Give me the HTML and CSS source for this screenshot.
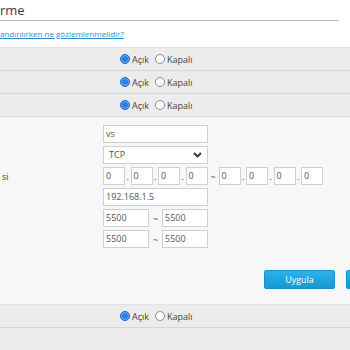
FILE: index.html
```html
<!DOCTYPE html>
<html>
<head>
<meta charset="utf-8">
<link rel="stylesheet" href="styles.css">
</head>
<body>
<div class="page">
  <div class="title">rme</div>
  <div class="helpline"><a class="help" href="#">andırılırken ne gözlemlenmelidir?</a></div>
  <div class="rows">
    <div class="row">
      <div class="radios">
        <span class="radio on"></span><span class="rlabel">Açık</span>
        <span class="radio"></span><span class="rlabel">Kapalı</span>
      </div>
    </div>
    <div class="row">
      <div class="radios">
        <span class="radio on"></span><span class="rlabel">Açık</span>
        <span class="radio"></span><span class="rlabel">Kapalı</span>
      </div>
    </div>
    <div class="row">
      <div class="radios">
        <span class="radio on"></span><span class="rlabel">Açık</span>
        <span class="radio"></span><span class="rlabel">Kapalı</span>
      </div>
    </div>
  </div>
  <div class="panel">
    <div class="form">
      <div class="label"></div>
      <div class="field"><div class="input wide">vs</div></div>
      <div class="label"></div>
      <div class="field">
        <div class="input wide select"><span>TCP</span>
          <svg class="chev" width="9" height="6" viewBox="0 0 9 6"><path d="M1 1 L4.5 4.5 L8 1" fill="none" stroke="#333" stroke-width="1.8"/></svg>
        </div>
      </div>
      <div class="label">si</div>
      <div class="field ip">
        <div class="input oct">0</div><span class="dot">.</span>
        <div class="input oct">0</div><span class="dot">.</span>
        <div class="input oct">0</div><span class="dot">.</span>
        <div class="input oct">0</div><span class="tilde">~</span>
        <div class="input oct">0</div><span class="dot">.</span>
        <div class="input oct">0</div><span class="dot">.</span>
        <div class="input oct">0</div><span class="dot">.</span>
        <div class="input oct">0</div>
      </div>
      <div class="label"></div>
      <div class="field"><div class="input wide">192.168.1.5</div></div>
      <div class="label"></div>
      <div class="field port">
        <div class="input half">5500</div><span class="ptilde">~</span><div class="input half">5500</div>
      </div>
      <div class="label"></div>
      <div class="field port">
        <div class="input half">5500</div><span class="ptilde">~</span><div class="input half">5500</div>
      </div>
    </div>
    <div class="actions">
      <button class="btn">Uygula</button>
      <button class="btn"></button>
    </div>
  </div>
  <div class="rows">
    <div class="row">
      <div class="radios">
        <span class="radio on"></span><span class="rlabel">Açık</span>
        <span class="radio"></span><span class="rlabel">Kapalı</span>
      </div>
    </div>
    <div class="row"></div>
  </div>
</div>
</body>
</html>
```

FILE: styles.css
```css
html, body {
  margin: 0;
  padding: 0;
  background: #ffffff;
}
body {
  font-family: "Open Sans", "Noto Sans", sans-serif;
  font-size: 9px;
  color: #444444;
  overflow: hidden;
  width: 350px;
  height: 350px;
}
.page {
  width: 380px;
}
.title {
  width: 338px;
  height: 21px;
  box-sizing: border-box;
  border-bottom: 1px solid #b5b5b5;
  font-size: 13px;
  line-height: 20px;
  color: #3a3a3a;
}
.helpline {
  height: 26px;
  padding-top: 6px;
  box-sizing: border-box;
}
.help {
  color: #2a8fd0;
  text-decoration: underline;
  font-size: 8px;
  line-height: 13px;
}
.rows {
  background: #ececec;
}
.row {
  height: 22px;
  border-bottom: 1px solid #d6d6d6;
  display: flex;
  align-items: center;
  padding-left: 120px;
}
.rows .row:first-child {
  border-top: 1px solid #e2e2e2;
}
.radios {
  display: flex;
  align-items: center;
}
.radio {
  border-radius: 50%;
  border: 1px solid #8a8a8a;
  background: #fff;
  box-sizing: border-box;
  width: 10px;
  height: 10px;
}
.radio.on {
  border-color: #1565c8;
  background: #2a7fe6;
  box-shadow: inset 0 0 0 1px #6fb0f5;
}
.rlabel {
  margin-left: 2px;
  margin-right: 6px;
  color: #444;
}
.panel {
  background: #f7f7f7;
  height: 187px;
  box-sizing: border-box;
  padding-top: 8px;
}
.form {
  display: grid;
  grid-template-columns: 103px auto;
  row-gap: 3px;
  align-items: center;
}
.label {
  padding-left: 2px;
  color: #444;
}
.field {
  display: flex;
  align-items: center;
}
.input {
  height: 18px;
  box-sizing: border-box;
  border: 1px solid #cfcfcf;
  background: #fff;
  padding-left: 2px;
  line-height: 16px;
  color: #555;
}
.wide {
  width: 105px;
}
.select {
  display: flex;
  align-items: center;
  justify-content: space-between;
  padding-left: 5px;
  padding-right: 5px;
}
.oct {
  width: 22px;
}
.dot {
  width: 5.5px;
  text-align: center;
  color: #555;
}
.tilde {
  width: 11px;
  text-align: center;
  color: #555;
}
.half {
  width: 46px;
}
.ptilde {
  width: 13px;
  text-align: center;
  color: #555;
}
.actions {
  display: flex;
  gap: 11px;
  padding-left: 264px;
  margin-top: 22px;
}
.btn {
  width: 71px;
  height: 19px;
  border: 1px solid #1590cc;
  border-radius: 2px;
  background: linear-gradient(#2cb3e8, #1598d4);
  color: #fff;
  font-family: "Open Sans", "Noto Sans", sans-serif;
  font-size: 9px;
  padding: 0;
  flex: none;
}
```
